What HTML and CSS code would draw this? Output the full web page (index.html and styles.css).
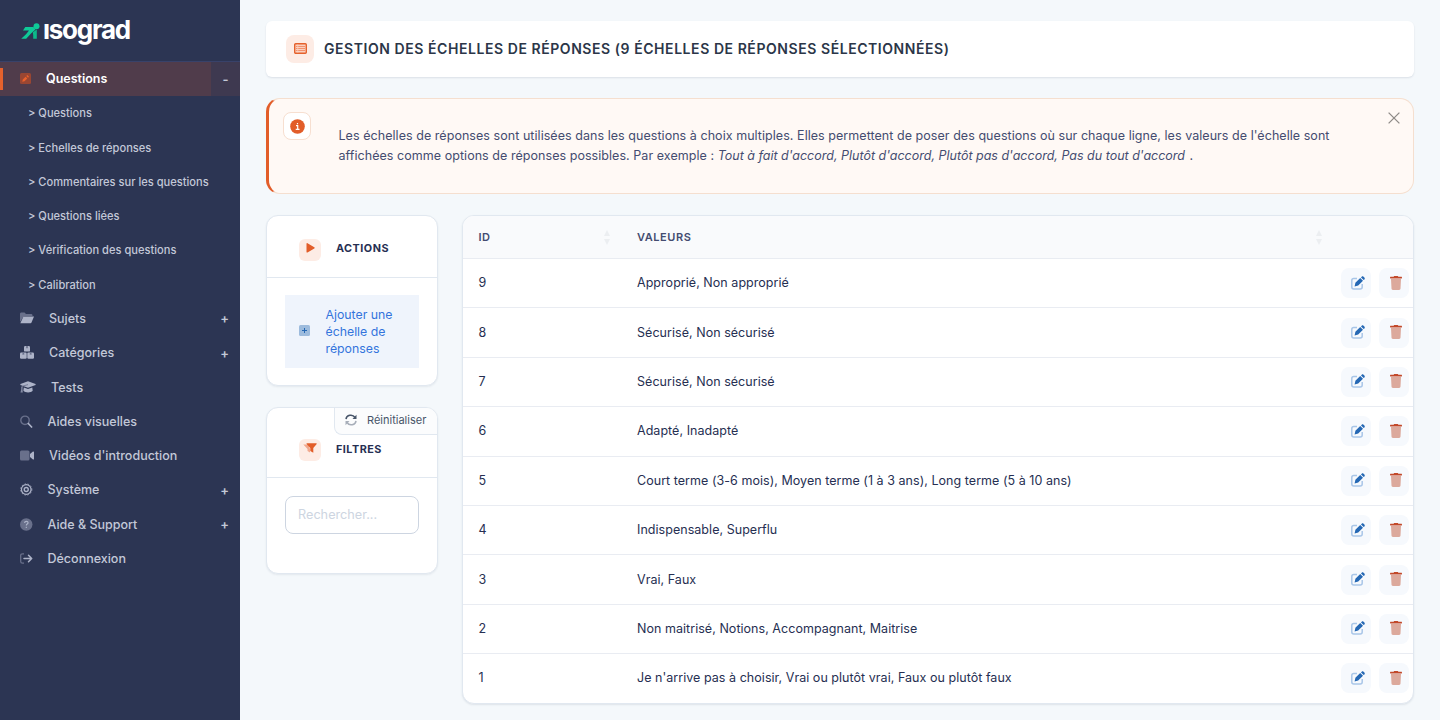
FILE: index.html
```html
<!DOCTYPE html>
<html lang="fr">
    <head>
        <meta charset="UTF-8">
        <meta name="viewport" content="width=device-width, initial-scale=1.0">
        <title>Gestion des échelles de réponses</title>
        <link rel="stylesheet" href="styles.css">
    </head>
    <body>
        <svg class="sprite" width="0" height="0">
            <symbol id="i-edit" viewBox="0 0 14 14">
                <path d="M6 2.500H2.800C1.600 2.500.8 3.300.8 4.500v6.500c0 1.200.8 2 2 2h6.400c1.200 0 2-.8 2-2V8" fill="none" stroke="#a9c6e8" stroke-width="1.500"/>
                <path d="M3.600 10.400l.8-3.600L9.200 2l2.800 2.800-4.800 4.800zM10 1.400l.7-.7c.5-.5 1.300-.5 1.800 0l.9.9c.5.5.5 1.300 0 1.800l-.7.700z" fill="#2568b4"/>
            </symbol>
            <symbol id="i-trash" viewBox="0 0 12 14">
                <path d="M1 3h10l-.5 9.600c0 .8-.6 1.400-1.400 1.400H2.900c-.8 0-1.400-.6-1.400-1.400z" fill="#dca99c"/>
                <path d="M.4.8h3.200L4.200 0h3.600l.6.8h3.200c.5 0 .5 1.800 0 1.800H.4c-.5 0-.5-1.800 0-1.800z" fill="#c2492a"/>
            </symbol>
        </svg>

        <div class="sidebar">
            <div class="brand">
                <svg class="brand-mark" viewBox="0 0 19 16">
                    <circle cx="15.500" cy="3.200" r="3" fill="#0fca98"/>
                    <path d="M4.300 4h8.200l2 2.500-4 3.500-5.300 5.800H.2L5 11.200 8 7.500H2z" fill="#0fca98"/>
                    <path d="M11.800 9.200L15.800 6.500v9.300h-3.600V12z" fill="#0cb98a"/>
                </svg>
                <span class="brand-name">ısograd</span>
            </div>
            <div class="menu">
                <div class="item active">
                    <svg class="icon" width="11" height="11" viewBox="0 0 11 11"><rect width="11" height="11" rx="1.500" fill="#994632"/><path d="M2.300 8.700l.5-2.200 2.800-2.800 1.700 1.700-2.800 2.800zM6.300 3l1-1 1.700 1.700-1 1z" fill="#ea612c"/></svg>
                    <span>Questions</span>
                    <b class="toggle">-</b>
                </div>
                <div class="sub">&gt; Questions</div>
                <div class="sub">&gt; Echelles de réponses</div>
                <div class="sub">&gt; Commentaires sur les questions</div>
                <div class="sub">&gt; Questions liées</div>
                <div class="sub">&gt; Vérification des questions</div>
                <div class="sub">&gt; Calibration</div>
                <div class="item">
                    <svg class="icon" width="14" height="12" viewBox="0 0 14 12"><path d="M0 10V2C0 1 .5.500 1.500.500h3L6 2h5c1 0 1.500.5 1.500 1.500V4H4z" fill="#69708b"/><path d="M3.500 4.500H14L11.500 10.500c-.2.6-.5.8-1 .8H.3z" fill="#adb3c8"/></svg>
                    <span>Sujets</span>
                    <b class="toggle">+</b>
                </div>
                <div class="item">
                    <svg class="icon" width="14" height="13" viewBox="0 0 14 13">
                        <rect x="4" width="6" height="5.600" rx="1.200" fill="#adb3c8"/>
                        <rect y="6.600" width="6.700" height="6.200" rx="1.200" fill="#adb3c8"/>
                        <rect x="7.300" y="6.600" width="6.700" height="6.200" rx="1.200" fill="#adb3c8"/>
                        <path d="M6.200 0h1.600v2.400L7 2l-.8.400zM2.500 6.600h1.700V9l-.8-.4-.9.400zM9.800 6.600h1.700V9l-.8-.4-.9.400z" fill="#69708b"/>
                    </svg>
                    <span>Catégories</span>
                    <b class="toggle">+</b>
                </div>
                <div class="item">
                    <svg class="icon" width="16" height="12" viewBox="0 0 16 12">
                        <path d="M8 .3l7.600 2.700v1L8 6.700.4 4V3z" fill="#adb3c8"/>
                        <path d="M8 3.600L3 5C2.200 5.500 2 6.500 2 7.500" fill="none" stroke="#69708b" stroke-width=".8"/>
                        <path d="M1.300 5.500h1.200V8l.3 3.500H.5L1.300 8z" fill="#858ca5"/>
                        <path d="M3.800 6.500L8 8l4.300-1.500.4 3.300C11 12 5.200 12 3.400 9.800z" fill="#adb3c8"/>
                    </svg>
                    <span>Tests</span>
                </div>
                <div class="item">
                    <svg class="icon" width="12.500" height="13" viewBox="0 0 12.5 13"><circle cx="5" cy="5.300" r="4.200" fill="none" stroke="#69708b" stroke-width="1.400"/><path d="M8.300 8.500l3.300 3.500" stroke="#adb3c8" stroke-width="1.700" stroke-linecap="round"/></svg>
                    <span>Aides visuelles</span>
                </div>
                <div class="item">
                    <svg class="icon" width="14" height="11" viewBox="0 0 14 11"><rect y=".5" width="9.500" height="10" rx="1.500" fill="#69708b"/><path d="M10 4l3-2.500c.5-.3 1 0 1 .5v7c0 .5-.5.800-1 .5L10 7z" fill="#adb3c8"/></svg>
                    <span>Vidéos d'introduction</span>
                </div>
                <div class="item">
                    <svg class="icon" width="12.500" height="13" viewBox="0 0 12.5 13" fill="none" stroke="#adb3c8"><circle cx="6.250" cy="6.500" r="4.800" stroke-width="1.200"/><circle cx="6.250" cy="6.500" r="5.600" stroke-width=".8" stroke-dasharray="1.500 1.500"/><circle cx="6.250" cy="6.500" r="2" stroke-width="1.400"/></svg>
                    <span>Système</span>
                    <b class="toggle">+</b>
                </div>
                <div class="item">
                    <svg class="icon" width="12.500" height="13" viewBox="0 0 12.5 13"><circle cx="6.250" cy="6.500" r="6.200" fill="#69708b"/><path d="M4.600 5c0-2.300 3.500-2.100 3.500-.2 0 1.300-1.800 1.200-1.800 2.600M6.300 8.700v1.200" fill="none" stroke="#adb3c8" stroke-width="1.100"/></svg>
                    <span>Aide &amp; Support</span>
                    <b class="toggle">+</b>
                </div>
                <div class="item">
                    <svg class="icon" width="12.500" height="11" viewBox="0 0 12.5 11" fill="none"><path d="M4 .8H2.500C1.300.8.700 1.400.700 2.500v6c0 1.100.6 1.700 1.800 1.700H4" stroke="#69708b" stroke-width="1.300"/><path d="M4 5.500h7.500M8.500 2.300l3.200 3.200-3.200 3.200" stroke="#adb3c8" stroke-width="1.500" stroke-linecap="round" stroke-linejoin="round"/></svg>
                    <span>Déconnexion</span>
                </div>
            </div>
        </div>

        <div class="main">
            <div class="title-bar">
                <div class="title-icon">
                    <svg width="13" height="11" viewBox="0 0 13 11"><rect x=".7" y=".7" width="11.600" height="9.600" rx="1" fill="#fad0bf" stroke="#e5612c" stroke-width="1.400"/><path d="M2 3.500h9M2 5.500h9M2 7.500h9" stroke="#f08a63" stroke-width=".9"/><path d="M3.800 1.500v8" stroke="#fad0bf" stroke-width=".8"/></svg>
                </div>
                <h1>GESTION DES ÉCHELLES DE RÉPONSES (9 ÉCHELLES DE RÉPONSES SÉLECTIONNÉES)</h1>
            </div>

            <div class="notice">
                <div class="notice-icon">
                    <svg width="15" height="15" viewBox="0 0 15 15"><circle cx="7.500" cy="7.500" r="7.300" fill="#e25d29"/><path d="M6 6.700h1.700v3.500M5.700 10.400h3.800M7.500 4v1.300" fill="none" stroke="#fff" stroke-width="1.200"/></svg>
                </div>
                <p>Les échelles de réponses sont utilisées dans les questions à choix multiples. Elles permettent de poser des questions où sur chaque ligne, les valeurs de l'échelle sont<br>affichées comme options de réponses possibles. Par exemple : <i>Tout à fait d'accord, Plutôt d'accord, Plutôt pas d'accord, Pas du tout d'accord</i> .</p>
                <svg class="close" width="12" height="12" viewBox="0 0 12 12"><path d="M.6.6l10.800 10.800M11.400.6L.6 11.400" stroke="#8f8b88" stroke-width="1.300"/></svg>
            </div>

            <div class="content">
                <div class="side">
                    <div class="card">
                        <div class="card-head">
                            <div class="card-icon"><svg width="9" height="10" viewBox="0 0 9 10"><path d="M.5.700C.5.100 1 0 1.500.2l6.800 4c.5.300.5.900 0 1.200l-6.800 4c-.5.300-1 0-1-.5z" fill="#e25d29"/></svg></div>
                            <h2>ACTIONS</h2>
                        </div>
                        <div class="card-body">
                            <a class="add">
                                <svg width="11" height="11" viewBox="0 0 11 11"><rect width="11" height="11" rx="1.500" fill="#9dbbdd"/><path d="M5.500 3v5M3 5.500h5" stroke="#2568b4" stroke-width="1"/></svg>
                                <span>Ajouter une échelle de réponses</span>
                            </a>
                        </div>
                    </div>
                    <div class="card filters">
                        <div class="reset">
                            <svg width="12" height="12" viewBox="0 0 12 12" fill="none" stroke-width="1.500"><path d="M1 5.200C1.500 1 7.500-.4 10 3.500" stroke="#475569"/><path d="M11.500.800v4.200H7.500z" fill="#475569"/><path d="M11 6.800C10.500 11 4.500 12.400 2 8.500" stroke="#a7aeb9"/><path d="M.5 11.200V7h4z" fill="#a7aeb9"/></svg>
                            <span>Réinitialiser</span>
                        </div>
                        <div class="card-head">
                            <div class="card-icon"><svg width="14" height="10" viewBox="0 0 14 10"><path d="M.3 1.500h5L7 6v3.500L4.500 8V6z" fill="#f1a88d"/><path d="M4 .3h9.200c.5 0 .6.600.3 1L10.300 5v4.700L7.300 8V5L3.800 1.300c-.4-.4-.3-1 .2-1z" fill="#e25d29"/></svg></div>
                            <h2>FILTRES</h2>
                        </div>
                        <div class="card-body">
                            <input type="text" placeholder="Rechercher...">
                        </div>
                    </div>
                </div>

                <div class="table-wrap">
                    <table>
                        <thead>
                            <tr>
                                <th class="col-id"><div class="th"><span>ID</span><span class="sort"></span></div></th>
                                <th><div class="th"><span>VALEURS</span><span class="sort"></span></div></th>
                                <th class="col-actions"></th>
                            </tr>
                        </thead>
                        <tbody>
                            <tr>
                                <td>9</td>
                                <td>Approprié, Non approprié</td>
                                <td class="actions"><div><a><svg width="14" height="14"><use href="#i-edit"/></svg></a><a><svg width="12" height="14"><use href="#i-trash"/></svg></a></div></td>
                            </tr>
                            <tr>
                                <td>8</td>
                                <td>Sécurisé, Non sécurisé</td>
                                <td class="actions"><div><a><svg width="14" height="14"><use href="#i-edit"/></svg></a><a><svg width="12" height="14"><use href="#i-trash"/></svg></a></div></td>
                            </tr>
                            <tr>
                                <td>7</td>
                                <td>Sécurisé, Non sécurisé</td>
                                <td class="actions"><div><a><svg width="14" height="14"><use href="#i-edit"/></svg></a><a><svg width="12" height="14"><use href="#i-trash"/></svg></a></div></td>
                            </tr>
                            <tr>
                                <td>6</td>
                                <td>Adapté, Inadapté</td>
                                <td class="actions"><div><a><svg width="14" height="14"><use href="#i-edit"/></svg></a><a><svg width="12" height="14"><use href="#i-trash"/></svg></a></div></td>
                            </tr>
                            <tr>
                                <td>5</td>
                                <td>Court terme (3-6 mois), Moyen terme (1 à 3 ans), Long terme (5 à 10 ans)</td>
                                <td class="actions"><div><a><svg width="14" height="14"><use href="#i-edit"/></svg></a><a><svg width="12" height="14"><use href="#i-trash"/></svg></a></div></td>
                            </tr>
                            <tr>
                                <td>4</td>
                                <td>Indispensable, Superflu</td>
                                <td class="actions"><div><a><svg width="14" height="14"><use href="#i-edit"/></svg></a><a><svg width="12" height="14"><use href="#i-trash"/></svg></a></div></td>
                            </tr>
                            <tr>
                                <td>3</td>
                                <td>Vrai, Faux</td>
                                <td class="actions"><div><a><svg width="14" height="14"><use href="#i-edit"/></svg></a><a><svg width="12" height="14"><use href="#i-trash"/></svg></a></div></td>
                            </tr>
                            <tr>
                                <td>2</td>
                                <td>Non maitrisé, Notions, Accompagnant, Maitrise</td>
                                <td class="actions"><div><a><svg width="14" height="14"><use href="#i-edit"/></svg></a><a><svg width="12" height="14"><use href="#i-trash"/></svg></a></div></td>
                            </tr>
                            <tr>
                                <td>1</td>
                                <td>Je n'arrive pas à choisir, Vrai ou plutôt vrai, Faux ou plutôt faux</td>
                                <td class="actions"><div><a><svg width="14" height="14"><use href="#i-edit"/></svg></a><a><svg width="12" height="14"><use href="#i-trash"/></svg></a></div></td>
                            </tr>
                        </tbody>
                    </table>
                </div>
            </div>
        </div>
    </body>
</html>
```
FILE: styles.css
```css
* {
    box-sizing: border-box;
}
body {
    margin: 0;
    display: flex;
    height: 720px;
    overflow: hidden;
    background-color: #f4f8fb;
    font-family: Inter, sans-serif;
    font-size: 12.500px;
    color: #262f52;
}
h1, h2, p {
    margin: 0;
}
svg {
    display: block;
    flex: none;
}
.sprite {
    position: absolute;
}

/* Sidebar */
.sidebar {
    width: 240px;
    flex: none;
    background-color: #2c3553;
}
.brand {
    height: 61.500px;
    padding: 0 0 0 21px;
    display: flex;
    align-items: center;
    border-bottom: 1px solid #38426a;
}
.brand-mark {
    width: 19px;
    height: 16px;
    margin-top: 2px;
}
.brand-name {
    margin-left: 3px;
    color: #fff;
    font-size: 26px;
    font-weight: 650;
    letter-spacing: -1.250px;
    line-height: 32px;
}
.item, .sub {
    height: 34.270px;
    display: flex;
    align-items: center;
    color: #c3c8d8;
    font-weight: 500;
}
.item {
    padding-left: 20px;
}
.icon {
    margin-right: 15px;
}
.sub {
    padding: 1px 0 0 28px;
    font-size: 11.100px;
}
.toggle {
    margin-left: auto;
    width: 29px;
    height: 100%;
    padding-right: 2px;
    display: flex;
    align-items: center;
    justify-content: center;
    font-size: 13px;
    font-weight: 600;
}
.item.active {
    background: linear-gradient(#e5612c, #e5612c) 0 50% / 3px 22px no-repeat #503c4b;
    color: #fff;
    font-weight: 600;
}
.active .toggle {
    padding-right: 0;
    background-color: #3e3950;
    color: #c3c8d8;
}

/* Page */
.main {
    flex: 1;
    padding: 21px 26px 0;
}
.title-bar {
    height: 56px;
    padding-left: 20px;
    display: flex;
    align-items: center;
    background-color: #fff;
    border-radius: 6px;
    box-shadow: 0 1px 2px rgba(30, 50, 80, 0.12);
}
.title-icon {
    width: 28px;
    height: 28px;
    margin-right: 10px;
    padding-bottom: 2px;
    display: flex;
    align-items: center;
    justify-content: center;
    background-color: #fdece5;
    border-radius: 8px;
}
h1 {
    margin-top: -2px;
    color: #2b3648;
    font-size: 14px;
    font-weight: 600;
    letter-spacing: 0.560px;
}
.notice {
    height: 96px;
    margin-top: 21px;
    padding: 13px 14px 0;
    display: flex;
    align-items: flex-start;
    background-color: #fff9f5;
    border: 1px solid #f5dfcf;
    border-left: 3px solid #e25d29;
    border-radius: 14px;
}
.notice-icon {
    width: 28px;
    height: 28px;
    display: flex;
    align-items: center;
    justify-content: center;
    background-color: #fff;
    border: 1px solid #f7dfd0;
    border-radius: 8px;
}
.notice p {
    margin: 14px 0 0 27.500px;
    color: #444c70;
    letter-spacing: 0.050px;
    line-height: 20px;
    white-space: nowrap;
}
.notice i {
    letter-spacing: 0;
    margin-right: 1px;
}
.close {
    margin: 0 -0.500px 0 auto;
}

.content {
    margin-top: 21px;
    display: flex;
    align-items: flex-start;
    gap: 24px;
}
.side {
    width: 172px;
    flex: none;
}
.card {
    height: 171px;
    margin-bottom: 21px;
    background-color: #fff;
    border: 1px solid #e1e8f0;
    border-radius: 12px;
    box-shadow: 0 1px 2px rgba(30, 50, 80, 0.08);
    overflow: hidden;
}
.card-head {
    height: 62px;
    padding: 7px 0 0 32px;
    display: flex;
    align-items: center;
    border-bottom: 1px solid #e1e8f0;
}
.card-icon {
    width: 22px;
    height: 22px;
    margin-right: 15px;
    padding-bottom: 4px;
    display: flex;
    align-items: center;
    justify-content: center;
    background-color: #fdece5;
    border-radius: 6px;
}
h2 {
    margin-top: -4px;
    font-size: 10.800px;
    font-weight: 700;
    letter-spacing: 0.500px;
}
.card-body {
    padding: 17px 18px;
}
.add {
    height: 73px;
    padding-left: 14px;
    display: flex;
    align-items: center;
    gap: 15.500px;
    background-color: #eff4fc;
    color: #3474dc;
    font-size: 12.300px;
    line-height: 17px;
}
.add svg {
    margin-top: -2px;
}
.filters {
    position: relative;
    height: 167px;
    margin-bottom: 0;
}
.filters .card-head {
    height: 70px;
    padding-top: 14px;
}
.filters h2 {
    margin-top: 0;
}
.filters .card-body {
    padding-top: 18px;
}
.reset {
    position: absolute;
    top: 0;
    right: 0;
    width: 103px;
    height: 27px;
    padding: 0 0 2px 10px;
    display: flex;
    align-items: center;
    gap: 10px;
    background-color: #fbfcfd;
    border: solid #e1e8f0;
    border-width: 0 0 1px 1px;
    border-bottom-left-radius: 8px;
    color: #475569;
    font-size: 11px;
}
input {
    width: 100%;
    height: 38px;
    padding: 0 12px 2px;
    border: 1px solid #cdd5e1;
    border-radius: 8px;
    font-family: inherit;
    font-size: 12.700px;
}
input::placeholder {
    color: #cdd5e1;
}

/* Table */
.table-wrap {
    flex: 1;
    background-color: #fff;
    border: 1px solid #e1e8f0;
    border-radius: 12px;
    box-shadow: 0 1px 2px rgba(30, 50, 80, 0.1);
    overflow: hidden;
}
table {
    width: 100%;
    table-layout: fixed;
    border-collapse: separate;
    border-spacing: 0;
}
th, td {
    padding: 0 15.500px;
    text-align: left;
    border-bottom: 1px solid #e9ecf2;
}
th {
    height: 43px;
    padding-right: 12px;
    background-color: #f9fafc;
    color: #444c70;
    font-size: 11px;
    font-weight: 600;
    letter-spacing: 0.550px;
}
td {
    height: 49.400px;
    padding-bottom: 1px;
    letter-spacing: 0.040px;
}
tr:last-child td {
    height: 48.400px;
    border-bottom: none;
}
.col-id {
    width: 158.500px;
}
.col-actions {
    width: 79px;
}
.th {
    display: flex;
    align-items: center;
    justify-content: space-between;
}
.sort::before, .sort::after {
    content: "";
    display: block;
    border: solid transparent;
    border-width: 0 3px;
}
.sort::before {
    border-bottom: 6px solid #eceef1;
    margin-bottom: 3px;
}
.sort::after {
    border-top: 6px solid #eceef1;
}
.actions {
    padding: 0;
}
.actions div {
    display: flex;
    gap: 8px;
    padding-left: 7px;
}
.actions a {
    width: 30px;
    height: 30px;
    padding: 0 0 1px 4px;
    display: flex;
    align-items: center;
    justify-content: center;
    background-color: #f6f9fd;
    border-radius: 8px;
}
```
